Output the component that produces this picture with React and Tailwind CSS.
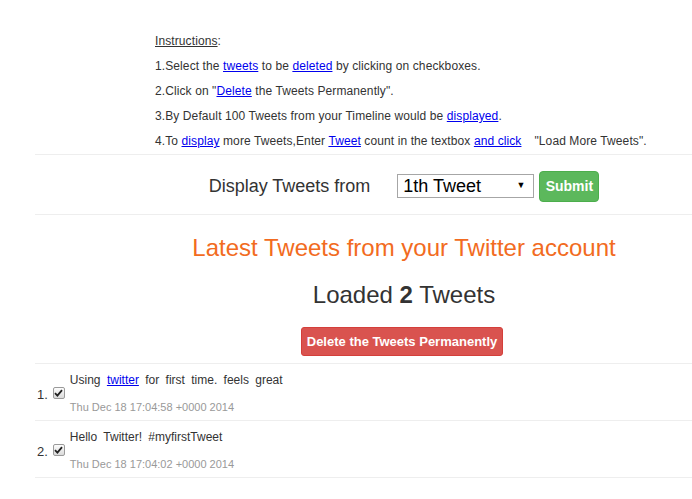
import React from "react";

const linkCls = "text-[#0000ee] underline";

function Check() {
  return (
    <span className="inline-flex items-center justify-center w-[12px] h-[12px] border border-[#9a9a9a] rounded-[2px] bg-gradient-to-b from-[#fdfdfd] to-[#dadada]">
      <svg width="9" height="8" viewBox="0 0 9 8">
        <path d="M1 4.2 L3.4 6.6 L8 1.2" fill="none" stroke="#222" strokeWidth="1.8" />
      </svg>
    </span>
  );
}

function TweetRow({ n, children, date }) {
  return (
    <div className="flex items-center border-b border-[#eee] pt-[8px] pb-[6px]">
      <span className="text-[13px] text-[#333] ml-[2px] mt-[4px]">{n}.</span>
      <span className="ml-[5px] mt-[-3px]"><Check /></span>
      <div className="ml-[5px]">
        <p className="text-[12px] leading-[16px] text-[#333] [word-spacing:3px]">{children}</p>
        <p className="text-[11px] leading-[14px] text-[#999] mt-[12px]">{date}</p>
      </div>
    </div>
  );
}

export default function App() {
  return (
    <div className="w-[692px] h-[499px] overflow-hidden bg-white font-['Liberation_Sans',Arial,sans-serif]">
      <div className="ml-[35px] w-[738px]">
        {/* instructions */}
        <div className="pl-[120px] pt-[29px] border-b border-[#eee] text-[12px] leading-[25px] tracking-[0.1px] text-[#333]">
          <p><span className="underline">Instructions</span>:</p>
          <p>1.Select the <a className={linkCls}>tweets</a> to be <a className={linkCls}>deleted</a> by clicking on checkboxes.</p>
          <p>2.Click on "<a className={linkCls}>Delete</a> the Tweets Permanently".</p>
          <p>3.By Default 100 Tweets from your Timeline would be <a className={linkCls}>displayed</a>.</p>
          <p>4.To <a className={linkCls}>display</a> more Tweets,Enter <a className={linkCls}>Tweet</a> count in the textbox <a className={linkCls}>and click</a><span className="ml-[13px]">"Load More Tweets".</span></p>
        </div>

        {/* form */}
        <div className="h-[60px] pt-[3px] flex items-center justify-center border-b border-[#eee]">
          <span className="text-[18px] text-[#333]">Display Tweets from</span>
          <div className="ml-[27px] w-[137px] h-[24px] border border-[#a6a6a6] flex items-center justify-between pl-[5px] pr-[8px] text-[18px] text-black">
            <span>1th Tweet</span>
            <span className="text-[9px]">▼</span>
          </div>
          <button className="ml-[5px] w-[60px] h-[31px] bg-[#5cb85c] border border-[#4cae4c] rounded-[4px] text-white text-[14px] font-bold">Submit</button>
        </div>

        {/* header */}
        <div className="flex flex-col items-center border-b border-[#eee]">
          <h1 className="mt-[19px] text-[24px] leading-[28px] text-[#f26b21]">Latest Tweets from your Twitter account</h1>
          <h2 className="mt-[19px] text-[24px] leading-[28px] text-[#333]">Loaded <b>2</b> Tweets</h2>
          <button className="mt-[18px] mb-[7px] mr-[4px] w-[202px] h-[29px] bg-[#d9534f] border border-[#d43f3a] rounded-[3px] text-white text-[13px] font-bold">Delete the Tweets Permanently</button>
        </div>

        <TweetRow n={1} date="Thu Dec 18 17:04:58 +0000 2014">
          Using <a className={linkCls}>twitter</a> for first time. feels great
        </TweetRow>
        <TweetRow n={2} date="Thu Dec 18 17:04:02 +0000 2014">
          Hello Twitter! #myfirstTweet
        </TweetRow>
      </div>
    </div>
  );
}
